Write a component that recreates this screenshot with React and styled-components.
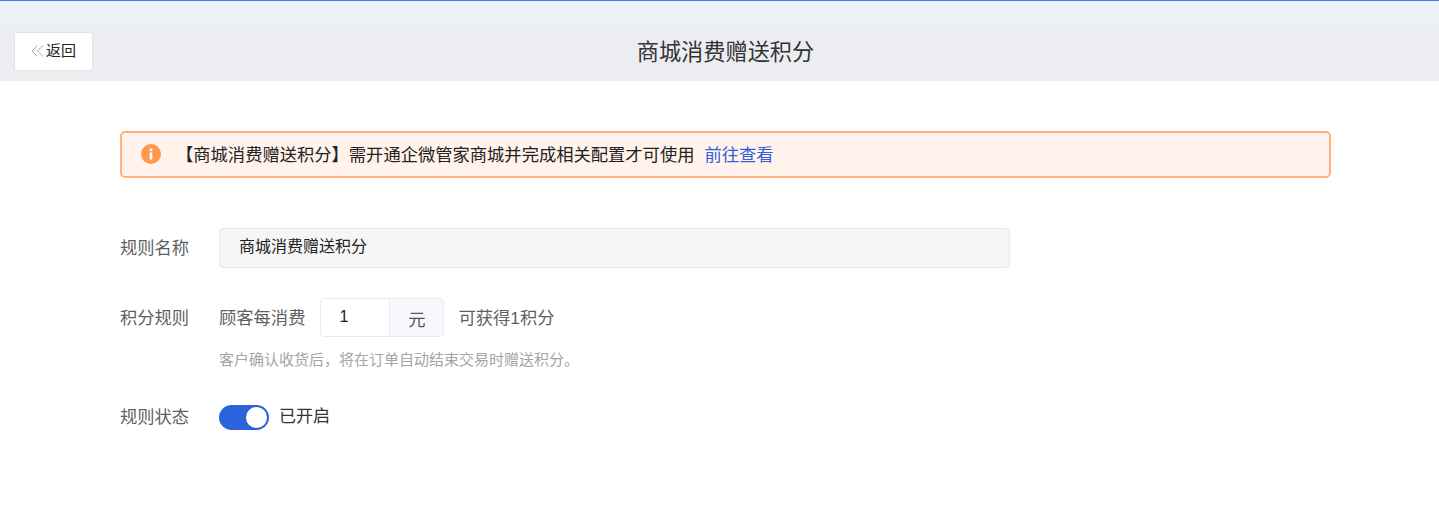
import React from 'react';
import styled, { createGlobalStyle } from 'styled-components';

const Global = createGlobalStyle`
  html, body { margin: 0; padding: 0; background: #fff; }
  body { font-family: "Liberation Sans", "Noto Sans CJK SC", sans-serif; }
  * { box-sizing: border-box; }
`;
const Page = styled.div`width: 1439px; height: 512px; overflow: hidden; background: #fff;`;
const TopStrip = styled.div`height: 23px; background: #ebf0f9; border-top: 1px solid #4a7bea;`;
const Header = styled.header`
  height: 58px; background: #ecedf1; display: grid; grid-template-columns: 1fr auto 1fr;
  align-items: center; padding-left: 14px;
`;
const BackButton = styled.button`
  justify-self: start; width: 79px; height: 39px; margin-top: -1px; background: #fff; border: 1px solid #e2e3e7; border-radius: 3px;
  display: flex; align-items: center; justify-content: center; gap: 2px; padding: 0 0 4px 0;
  font: 15px "Liberation Sans", "Noto Sans CJK SC", sans-serif; color: #222;
`;
const BackIcon = styled.svg`margin-top: 3px; flex: none;`;
const Title = styled.h1`margin: 1px 0 0; font-size: 22.2px; font-weight: 400; color: #333; line-height: 30px; position: relative; left: -1px;`;
const Content = styled.main`padding: 50px 108px 0 120px;`;
const Alert = styled.div`
  height: 47px; background: #fff3eb; border: 2px solid #ffb27c; border-radius: 5px;
  display: flex; align-items: center; padding-left: 19px; font-size: 17.3px; color: #222;
`;
const AlertIcon = styled.svg`flex: none; margin-top: -1px;`;
const AlertText = styled.span`margin-left: 15px; margin-top: -3px;`;
const AlertLink = styled.a`margin-left: 10px; margin-top: -3px; color: #2f5fd9;`;
const Form = styled.div`display: flex; flex-direction: column; margin-top: 50px;`;
const Row = styled.div`display: flex; align-items: flex-start; margin-top: ${p => p.$gap || 0}px;`;
const Label = styled.div`width: 99px; font-size: 17.3px; line-height: 40px; color: #5f5f5f;`;
const NameInput = styled.div`
  width: 791px; height: 40px; background: #f6f6f7; border: 1px solid #e8e8ec; border-radius: 4px;
  padding-left: 19px; font-size: 16px; line-height: 36px; color: #222;
`;
const RuleColumn = styled.div`display: flex; flex-direction: column;`;
const RuleLine = styled.div`display: flex; align-items: flex-start; height: 39px; font-size: 17.3px; color: #5f5f5f; line-height: 40px;`;
const Unit = styled.div`
  display: flex; width: 124px; height: 39px; margin: 0 14px 0 15px; border: 1px solid #e9eaef; border-radius: 4px; overflow: hidden;
`;
const NumberCell = styled.div`width: 68px; padding: 8px 0 0 18px; font-size: 16px; line-height: 20px; color: #222; background: #fff;`;
const UnitCell = styled.div`flex: 1; background: #f7f8fb; border-left: 1px solid #eeeff3; text-align: center; font-size: 17.3px; line-height: 42px; color: #555;`;
const Hint = styled.div`margin-top: 13px; font-size: 15px; line-height: 20px; color: #a4a4a4;`;
const Status = styled.div`display: flex; align-items: flex-start; height: 40px; gap: 10px; font-size: 17px; line-height: 40px; color: #333;`;
const Toggle = styled.span`
  margin-top: 8px; width: 50px; height: 25px; border-radius: 13px; background: #2b63dc; position: relative; display: block;
`;
const Knob = styled.span`
  position: absolute; right: 2px; top: 2px; width: 21px; height: 21px; border-radius: 50%; background: #fff;
`;

export default function App() {
  return (
    <Page>
      <Global />
      <TopStrip />
      <Header>
        <BackButton>
          <BackIcon width="13" height="12" viewBox="0 0 13 12" fill="none" stroke="#9aa7b8" strokeWidth="1">
            <path d="M6.500 .5 1 6l5.500 5.500M12 .5 6.500 6l5.500 5.500" />
          </BackIcon>
          返回
        </BackButton>
        <Title>商城消费赠送积分</Title>
      </Header>
      <Content>
        <Alert>
          <AlertIcon width="20" height="20" viewBox="0 0 20 20">
            <circle cx="10" cy="10" r="10" fill="#ff9a4d" />
            <rect x="8.700" y="4.500" width="2.600" height="2.600" fill="#fff" />
            <rect x="8.700" y="8.500" width="2.600" height="7" fill="#fff" />
          </AlertIcon>
          <AlertText>【商城消费赠送积分】需开通企微管家商城并完成相关配置才可使用</AlertText>
          <AlertLink>前往查看</AlertLink>
        </Alert>
        <Form>
          <Row>
            <Label>规则名称</Label>
            <NameInput>商城消费赠送积分</NameInput>
          </Row>
          <Row $gap={30}>
            <Label>积分规则</Label>
            <RuleColumn>
              <RuleLine>
                顾客每消费
                <Unit>
                  <NumberCell>1</NumberCell>
                  <UnitCell>元</UnitCell>
                </Unit>
                可获得1积分
              </RuleLine>
              <Hint>客户确认收货后，将在订单自动结束交易时赠送积分。</Hint>
            </RuleColumn>
          </Row>
          <Row $gap={27}>
            <Label>规则状态</Label>
            <Status>
              <Toggle><Knob /></Toggle>
              已开启
            </Status>
          </Row>
        </Form>
      </Content>
    </Page>
  );
}
